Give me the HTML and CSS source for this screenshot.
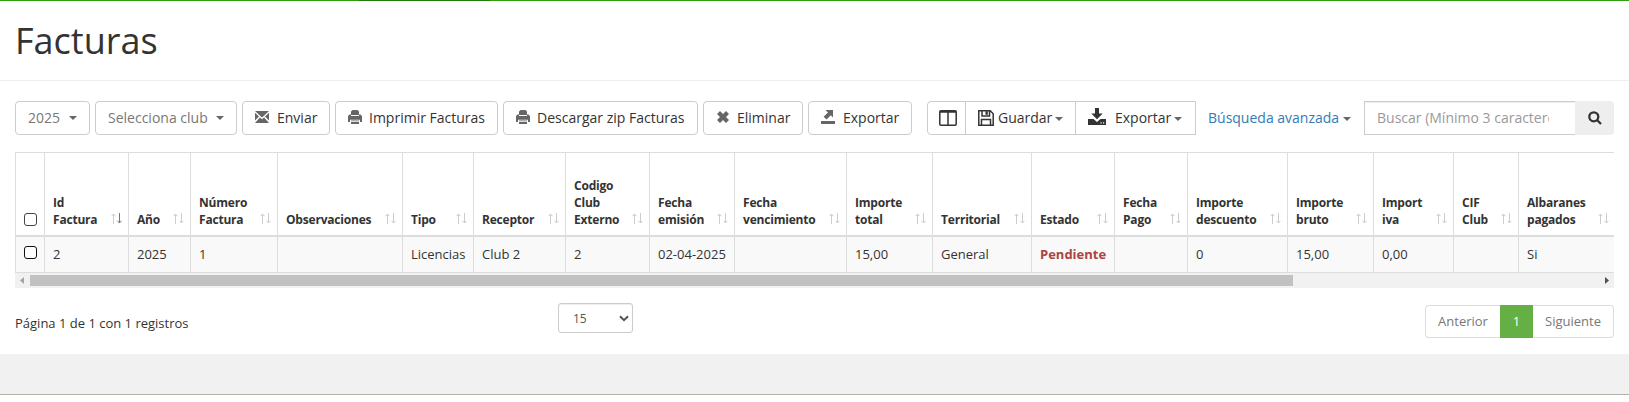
FILE: index.html
```html
<!DOCTYPE html>
<html lang="es">
<head>
<meta charset="utf-8">
<title>Facturas</title>
<link rel="stylesheet" href="styles.css">
</head>
<body>
<svg class="defs" width="0" height="0">
  <symbol id="sort" viewBox="0 0 11 11"><path class="up" d="M2.5 11V1M.5 3.2L2.5 1l2 2.2"/><path class="down" d="M8.5 0v10M6.5 7.8l2 2.2 2-2.2"/></symbol>
  <symbol id="print" viewBox="0 0 14 14"><path d="M4.500 0h5L11 1.500V5H3V1.500zM1.500 4.500H3V6h8V4.500h1.500L14 6v6h-2V9.800H2V12H0V6zM3 10.500h8v.8H3zM3 12h8v2H3z"/></symbol>
</svg>
<div class="topbar"><span class="topbar-active"></span></div>
<header class="page-header"><h1>Facturas</h1></header>
<main class="content">
  <div class="toolbar">
    <button class="btn muted w-year">2025<i class="caret"></i></button>
    <button class="btn muted w-club">Selecciona club<i class="caret"></i></button>
    <button class="btn w-send"><svg class="ico" width="14" height="12" viewBox="0 0 14 12"><path d="M0 0h14L7 6.4zM0 1.8l4 3.6L0 9.6zM14 1.8l-4 3.6 4 4.2zM0 12l4.900-5.600L7 8.200l2.100-1.800L14 12z"/></svg>Enviar</button>
    <button class="btn w-print"><svg class="ico" width="14" height="14"><use href="#print"/></svg>Imprimir Facturas</button>
    <button class="btn w-zip"><svg class="ico" width="14" height="14"><use href="#print"/></svg>Descargar zip Facturas</button>
    <button class="btn w-del"><svg class="ico" width="12" height="12" viewBox="0 0 12 12"><path d="M3 0l3 3 3-3 3 3-3 3 3 3-3 3-3-3-3 3-3-3 3-3-3-3z"/></svg>Eliminar</button>
    <button class="btn w-exp"><svg class="ico" width="14" height="14" viewBox="0 0 14 14"><path d="M4.500 0H12v7.500L9.800 5.300 5.600 9.600 2.600 6.800 7 2.500zM0 11h14v3H0z"/></svg>Exportar</button>
    <div class="group">
      <button class="btn w-cols"><svg width="18" height="16" viewBox="0 0 18 16"><path class="line" d="M1.800.8h14.400q1 0 1 1v12.400q0 1-1 1H1.800q-1 0-1-1V1.800q0-1 1-1zM1 2h16M9 1v14"/></svg></button>
      <button class="btn w-save"><svg width="16" height="16" viewBox="0 0 16 16"><path class="line" d="M.8.8h11.400l3 3v11.400H.8zM4 1v5h7.500V1M3.500 15V9.500h9V15"/><path d="M7.500 1.200h2.300v3.600H7.500z"/></svg><span>Guardar</span><i class="caret"></i></button>
      <button class="btn w-down"><svg width="18" height="17" viewBox="0 0 18 17"><path d="M7 0h4v5.500h3.700L9 11.200 3.300 5.500H7zM0 11h5.500L9 14l3.500-3H18v6H0zM12.500 14.200v1.200h1.200v-1.200zM15 14.200v1.200h1.200v-1.200z" fill-rule="evenodd"/></svg><span>Exportar</span><i class="caret"></i></button>
    </div>
    <a class="advanced">Búsqueda avanzada<i class="caret"></i></a>
    <div class="search">
      <input class="search-box" type="text" placeholder="Buscar (Mínimo 3 caracteres)">
      <div class="addon"><svg width="14" height="14" viewBox="0 0 14 14"><circle cx="5.800" cy="5.800" r="4.500"/><path d="M9 9l4 4"/></svg></div>
    </div>
  </div>

  <table class="grid">
    <colgroup><col class="c0"><col class="c1"><col class="c2"><col class="c3"><col class="c4"><col class="c5"><col class="c6"><col class="c7"><col class="c8"><col class="c9"><col class="c10"><col class="c11"><col class="c12"><col class="c13"><col class="c14"><col class="c15"><col class="c16"><col class="c17"><col class="c18"></colgroup>
    <thead><tr>
      <th><div class="check-cell"><span class="check soft"></span></div></th>
      <th><div class="th"><span>Id<br>Factura</span><svg class="sort desc"><use href="#sort"/></svg></div></th>
      <th><div class="th"><span>Año</span><svg class="sort"><use href="#sort"/></svg></div></th>
      <th><div class="th"><span>Número<br>Factura</span><svg class="sort"><use href="#sort"/></svg></div></th>
      <th><div class="th"><span>Observaciones</span><svg class="sort"><use href="#sort"/></svg></div></th>
      <th><div class="th"><span>Tipo</span><svg class="sort"><use href="#sort"/></svg></div></th>
      <th><div class="th"><span>Receptor</span><svg class="sort"><use href="#sort"/></svg></div></th>
      <th><div class="th"><span>Codigo<br>Club<br>Externo</span><svg class="sort"><use href="#sort"/></svg></div></th>
      <th><div class="th"><span>Fecha<br>emisión</span><svg class="sort"><use href="#sort"/></svg></div></th>
      <th><div class="th"><span>Fecha<br>vencimiento</span><svg class="sort"><use href="#sort"/></svg></div></th>
      <th><div class="th"><span>Importe<br>total</span><svg class="sort"><use href="#sort"/></svg></div></th>
      <th><div class="th"><span>Territorial</span><svg class="sort"><use href="#sort"/></svg></div></th>
      <th><div class="th"><span>Estado</span><svg class="sort"><use href="#sort"/></svg></div></th>
      <th><div class="th"><span>Fecha<br>Pago</span><svg class="sort"><use href="#sort"/></svg></div></th>
      <th><div class="th"><span>Importe<br>descuento</span><svg class="sort"><use href="#sort"/></svg></div></th>
      <th><div class="th"><span>Importe<br>bruto</span><svg class="sort"><use href="#sort"/></svg></div></th>
      <th><div class="th"><span>Import<br>iva</span><svg class="sort"><use href="#sort"/></svg></div></th>
      <th><div class="th"><span>CIF<br>Club</span><svg class="sort"><use href="#sort"/></svg></div></th>
      <th><div class="th last"><span>Albaranes<br>pagados</span><svg class="sort"><use href="#sort"/></svg></div></th>
    </tr></thead>
    <tbody><tr>
      <td><div class="check-cell row"><span class="check"></span></div></td>
      <td>2</td><td>2025</td><td>1</td><td></td><td>Licencias</td><td>Club 2</td><td>2</td><td>02-04-2025</td><td></td><td>15,00</td><td>General</td><td><b class="pending">Pendiente</b></td><td></td><td>0</td><td>15,00</td><td>0,00</td><td></td><td>Si</td>
    </tr></tbody>
  </table>
  <div class="scrollbar">
    <svg width="15" height="15"><path d="M9 4v7L5 7.500z" fill="#a3a3a3"/></svg>
    <div class="thumb"></div>
    <svg class="right" width="15" height="15"><path d="M6 4v7l4-3.500z" fill="#505050"/></svg>
  </div>

  <div class="table-foot">
    <span class="info">Página 1 de 1 con 1 registros</span>
    <div class="page-size"><span>15</span><svg width="10" height="7" viewBox="0 0 10 7"><path d="M1 1.200l4 4 4-4"/></svg></div>
    <nav class="pager"><span class="prev">Anterior</span><span class="current">1</span><span class="next">Siguiente</span></nav>
  </div>
</main>
<footer class="footer"></footer>
</body>
</html>
```
FILE: styles.css
```css
* { box-sizing: border-box; }
body { margin: 0; background: #fff; color: #333; font: 14px/20px "Open Sans", sans-serif; overflow: hidden; }
.defs { position: absolute; }
svg { display: block; flex: none; }
.topbar { height: 1px; background: #2f9e0c; display: flex; }
.topbar-active { width: 131px; margin-left: 359px; background: #1f7a06; }
.page-header { height: 80px; padding: 20px 15px 0; border-bottom: 1px solid #eee; }
.page-header h1 { margin: 0; font-size: 36px; line-height: 40px; font-weight: 400; }
.content { height: 273px; padding: 20px 15px 0; }

.toolbar { display: flex; height: 34px; }
.btn { display: flex; align-items: center; height: 34px; margin: 0 5px 0 0; padding: 0 0 0 12px; border: 1px solid #ccc; border-radius: 4px; background: #fff; color: #333; font: inherit; white-space: nowrap; }
.btn.muted { color: #777; }
.caret { flex: none; border: 4px solid transparent; border-top-color: #666; border-bottom: 0; }
.muted .caret { margin-left: 9px; }
.w-club .caret { margin-left: 8px; }
.ico { fill: #666; margin-right: 7px; margin-bottom: 2px; }
.w-year { width: 75px; }
.w-club { width: 142px; }
.w-send { width: 88px; }
.w-send .ico { margin-right: 8px; }
.w-print { width: 163px; }
.w-zip { width: 195px; }
.w-del { width: 100px; padding-left: 13px; }
.w-del .ico { margin-right: 8px; }
.w-exp { width: 104px; }
.w-exp .ico { margin-right: 8px; }
.group { display: flex; margin-left: 10px; }
.group .btn { margin: 0 0 0 -1px; border-radius: 0; }
.group .btn:first-child { margin-left: 0; border-radius: 4px 0 0 4px; }
.group .caret { margin-left: 3px; margin-top: 1px; }
.line { fill: none; stroke: #333; stroke-width: 1.5; }
.group svg { fill: #333; }
.w-cols { width: 39px; padding-left: 11px; }
.w-save { width: 111px; padding-left: 12px; }
.w-save svg { margin-right: 4px; }
.w-down { width: 121px; }
.w-down svg { margin: 0 9px 3px 0; }
.advanced { display: flex; align-items: center; margin-left: 12px; width: 156px; color: #337ab7; white-space: nowrap; }
.advanced .caret { margin: 1px 0 0 4px; }
.search { display: flex; }
.search-box { width: 211px; height: 34px; margin: 0; border: 1px solid #ccc; border-right: 0; border-radius: 0; padding: 5px 26px 7px 12px; background: #fff; box-shadow: inset 0 1px 1px rgba(0,0,0,.075); font: inherit; }
.search-box::placeholder { color: #999; opacity: 1; }
.addon { display: flex; align-items: center; justify-content: center; width: 39px; background: #eee; border-radius: 0 4px 4px 0; }
.addon svg { fill: none; stroke: #333; stroke-width: 2.3; }

.grid { width: 1599px; margin-top: 17px; table-layout: fixed; border-collapse: separate; border-spacing: 0; font-size: 13px; line-height: 17px; }
.grid th { height: 85px; padding: 0 0 7px 8px; vertical-align: bottom; text-align: left; font-size: 12px; letter-spacing: -0.2px; border: solid #ddd; border-width: 1px 0 2px 1px; }
.grid td { height: 36px; padding: 0 0 0 8px; background: #f9f9f9; border: solid #ddd; border-width: 0 0 1px 1px; white-space: nowrap; }
.th { display: flex; justify-content: space-between; align-items: flex-end; padding-right: 6px; }
.th.last { padding-right: 5px; }
.th span { white-space: nowrap; }
.sort { width: 11px; height: 11px; margin-bottom: 4px; --up: #ccc; --down: #ccc; }
.sort.desc { --down: #777; }
.up, .down { fill: none; stroke-width: 1; }
.up { stroke: var(--up); }
.down { stroke: var(--down); }
.check-cell { display: flex; padding-bottom: 2px; }
.check-cell.row { padding-bottom: 4px; }
.check { width: 13px; height: 13px; border: 1px solid #111; border-radius: 3px; background: #fff; }
.check.soft { border-color: #444; }
.pending { color: #a94442; }
.c0 { width: 29px; } .c1 { width: 84px; } .c2 { width: 62px; } .c3 { width: 87px; }
.c4 { width: 125px; } .c5 { width: 71px; } .c6 { width: 92px; } .c7 { width: 84px; }
.c8 { width: 85px; } .c9 { width: 112px; } .c10 { width: 86px; } .c11 { width: 99px; }
.c12 { width: 83px; } .c13 { width: 73px; } .c14 { width: 100px; } .c15 { width: 86px; }
.c16 { width: 80px; } .c17 { width: 65px; } .c18 { width: 96px; }

.scrollbar { display: flex; height: 15px; background: #f1f1f1; }
.thumb { width: 1263px; margin: 2px 0; background: #c1c1c1; }
.right { margin-left: auto; }

.table-foot { display: flex; align-items: flex-start; padding-top: 15px; font-size: 13px; }
.info { width: 543px; padding-top: 10px; }
.page-size { display: flex; align-items: center; justify-content: space-between; width: 75px; height: 30px; border: 1px solid #ccc; border-radius: 3px; padding: 1px 3px 0 14px; font-size: 12px; color: #555; box-shadow: inset 0 1px 1px rgba(0,0,0,.075); }
.page-size svg { fill: none; stroke: #555; stroke-width: 2; }
.pager { display: flex; margin: 2px 0 0 auto; height: 33px; line-height: 31px; color: #777; text-align: center; }
.pager span { border: 1px solid #ddd; }
.pager .prev { width: 75px; border-right: 0; border-radius: 4px 0 0 4px; }
.pager .current { width: 33px; background: #64b045; border-color: #64b045; color: #fff; }
.pager .next { width: 81px; border-left: 0; border-radius: 0 4px 4px 0; }
.footer { height: 41px; background: #f1f1f1; border-bottom: 1px solid #b0b1a4; }
```
